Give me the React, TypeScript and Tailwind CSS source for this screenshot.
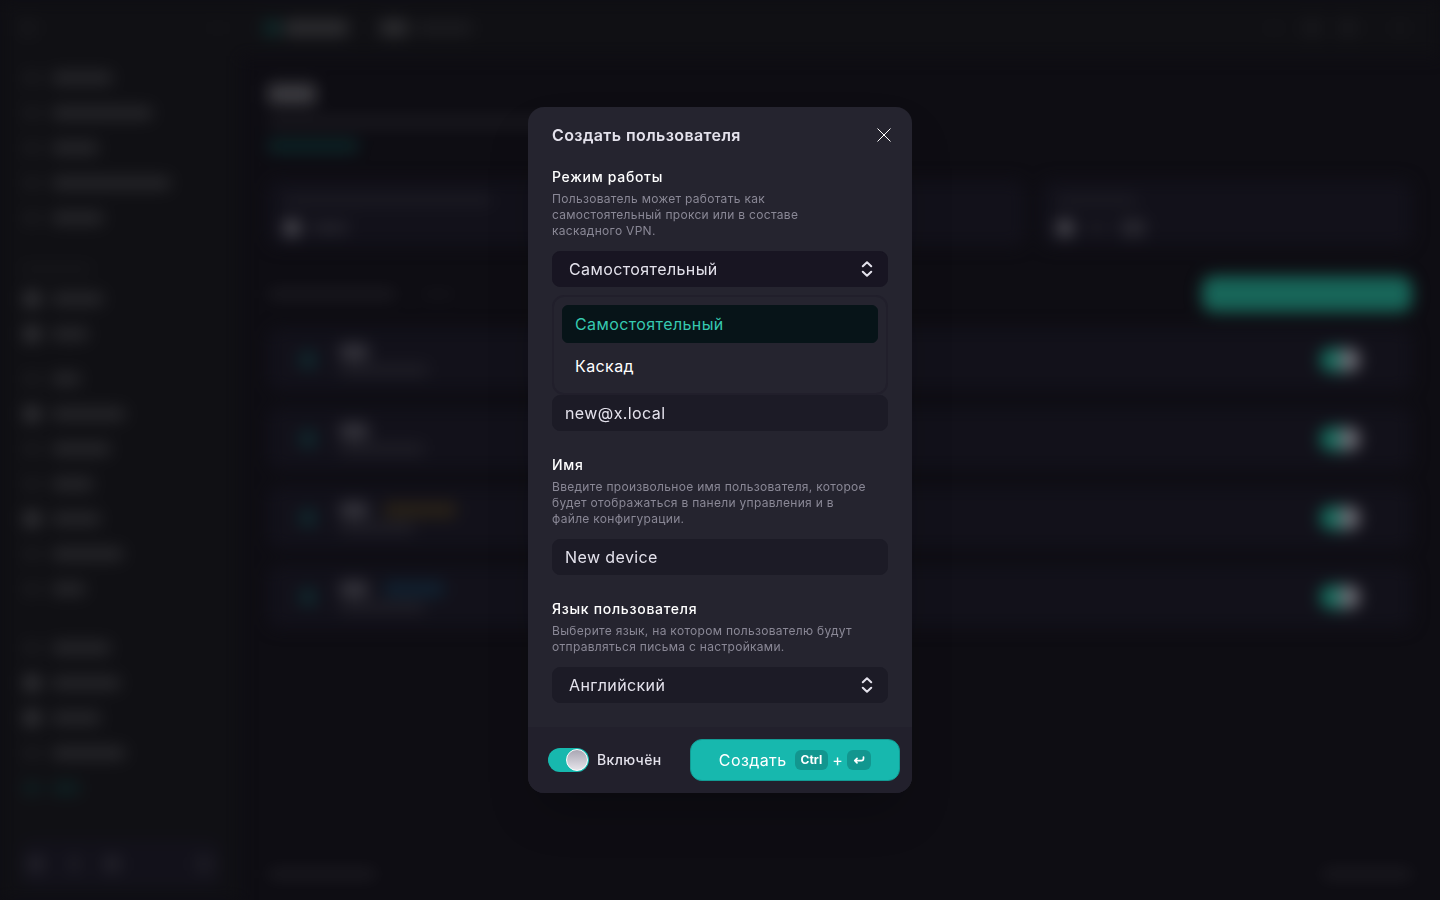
import { useState } from 'react'
import clsx from 'clsx'

const NAV_GROUPS = [
  { heading: 0, gap: 'mt-0', items: [60, 100, 46, 118, 51], bright: [] },
  { heading: 72, gap: 'mt-[22px]', items: [51, 36], bright: [0, 1] },
  { heading: 0, gap: 'mt-[10px]', items: [28, 73, 58, 41, 48, 71, 33], bright: [1, 4] },
  { heading: 0, gap: 'mt-6', items: [58, 68, 48, 73, 28], bright: [1, 2] },
]

const USERS = [
  { id: 1, sub: 88, badge: '' },
  { id: 2, sub: 84, badge: '' },
  { id: 3, sub: 74, badge: 'w-[72px] bg-yellow-500/10' },
  { id: 4, sub: 84, badge: 'w-[60px] bg-sky-500/10' },
]

const MODES = ['Самостоятельный', 'Каскад']

function Bar({ width, className }: { width?: number; className?: string }) {
  return <span className={clsx('block shrink-0 rounded', className)} style={width ? { width } : undefined} />
}

function Sidebar() {
  return (
    <aside className="flex w-60 shrink-0 flex-col bg-[#101014] px-5">
      <div className="flex h-[60px] items-center justify-between pb-1">
        <Bar className="h-4 w-4 bg-white/3" />
        <Bar className="h-4 w-1 bg-white/3" />
      </div>
      <nav>
        {NAV_GROUPS.map((group, i) => (
          <div key={i} className={group.gap}>
            {group.heading > 0 && (
              <div className="flex h-6 items-center">
                <Bar width={group.heading} className="h-2 bg-white/3" />
              </div>
            )}
            {group.items.map((width, j) => {
              const active = i === 3 && j === 4
              const bright = group.bright.includes(j)
              return (
                <a key={j} href="#" className="flex h-[35px] items-center gap-3 pl-1">
                  <Bar className={clsx('w-4', active ? 'h-3 bg-teal-500/10' : bright ? 'h-4 bg-white/15' : 'h-3 bg-white/5')} />
                  <Bar width={width} className={clsx('h-3', active ? 'bg-teal-500/10' : 'bg-white/10')} />
                </a>
              )
            })}
          </div>
        ))}
      </nav>
      <div className="mt-auto mb-3 flex h-12 items-center gap-6 rounded-xl bg-[#12111a] px-2">
        <Bar className="h-4 w-4 bg-white/8" />
        <Bar className="h-4 w-3 bg-white/5" />
        <Bar className="h-4 w-4 bg-white/8" />
        <Bar className="ml-auto h-4 w-4 bg-white/5" />
      </div>
    </aside>
  )
}

function Backdrop() {
  return (
    <div inert className="flex min-h-screen blur-[8px]">
      <Sidebar />
      <div className="flex min-w-0 flex-1 flex-col">
        <header className="flex h-14 items-center bg-[#101014] pr-9 pl-6">
          <Bar className="h-4 w-4 bg-teal-500/15" />
          <Bar className="ml-1 h-4 w-16 bg-white/12" />
          <Bar className="ml-8 h-4 w-7 bg-white/12" />
          <Bar className="ml-2 h-3 w-14 bg-white/5" />
          <div className="ml-auto flex items-center gap-5">
            <Bar className="h-1 w-5 bg-white/3" />
            <Bar className="h-4 w-4 bg-white/4" />
            <Bar className="h-4 w-4 bg-white/4" />
            <Bar className="ml-5 h-4 w-2 bg-white/3" />
          </div>
        </header>
        <main className="flex flex-1 flex-col px-7 pt-7">
          <Bar className="h-5 w-12 bg-white/20" />
          <Bar className="mt-3 h-3 w-[400px] bg-white/5" />
          <Bar className="mt-3 h-3 w-[90px] bg-teal-500/15" />
          <div className="mt-7 grid grid-cols-3 gap-4">
            <div className="col-span-2 h-[66px] rounded-xl bg-[#12111a] p-4">
              <Bar className="h-2 w-52 bg-white/5" />
              <div className="mt-4 flex items-center gap-3">
                <Bar className="h-4 w-4 bg-white/25" />
                <Bar className="h-2 w-9 bg-white/10" />
              </div>
            </div>
            <div className="h-[66px] rounded-xl bg-[#12111a] p-4">
              <Bar className="h-2 w-20 bg-white/5" />
              <div className="mt-4 flex items-center gap-3">
                <Bar className="h-4 w-4 bg-white/25" />
                <Bar className="h-2 w-6 bg-white/5" />
                <Bar className="h-4 w-6 bg-white/10" />
              </div>
            </div>
          </div>
          <div className="mt-[30px] flex h-9 items-center">
            <Bar className="h-3 w-32 bg-white/5" />
            <Bar className="ml-6 h-2 w-9 bg-white/3" />
            <button type="button" className="ml-auto h-9 w-[210px] rounded-xl bg-[#186659]" />
          </div>
          <ul className="mt-4 flex flex-col gap-4">
            {USERS.map((user) => (
              <li key={user.id} className="flex h-[63px] items-center rounded-xl bg-[#12111a] pr-13 pl-8">
                <Bar className="h-4 w-4 bg-teal-500/15" />
                <div className="ml-6">
                  <div className="flex items-center gap-4">
                    <Bar className="h-4 w-7 bg-white/15" />
                    {user.badge && <Bar className={clsx('h-4', user.badge)} />}
                  </div>
                  <Bar width={user.sub} className="mt-1 h-3 bg-white/5" />
                </div>
                <input
                  type="checkbox"
                  defaultChecked
                  className="ml-auto h-6 w-10 appearance-none rounded-full bg-[#15705f] before:ml-[18px] before:block before:h-6 before:w-[22px] before:rounded-full before:bg-[#6a6a72]"
                />
              </li>
            ))}
          </ul>
          <footer className="mt-auto mb-5 flex justify-between">
            <Bar className="h-3 w-[108px] bg-white/5" />
            <Bar className="h-3 w-[90px] bg-white/5" />
          </footer>
        </main>
      </div>
    </div>
  )
}

function Chevrons() {
  return (
    <svg
      className="pointer-events-none absolute top-2.5 right-[15px] h-4 w-3"
      viewBox="0 0 12 16"
      fill="none"
      stroke="#e4e2ec"
      strokeWidth="2"
      strokeLinecap="round"
      strokeLinejoin="round"
    >
      <path d="M1.8 5.2 6 1.2l4.2 4M1.8 10.8l4.2 4 4.2-4" />
    </svg>
  )
}

function FieldText({ id, title, text }: { id: string; title: string; text: string }) {
  return (
    <>
      <label htmlFor={id} className="block text-sm leading-5 font-medium tracking-wider text-white">{title}</label>
      <p className="mt-1 mr-4 mb-3 text-xs leading-4 tracking-wide text-[#8a8896]">{text}</p>
    </>
  )
}

function CreateUserDialog() {
  const [mode, setMode] = useState(MODES[0])

  return (
    <div role="dialog" aria-labelledby="dialog-title" className="w-96 overflow-hidden rounded-2xl bg-[#25242f] shadow-2xl">
      <div className="flex items-center justify-between px-6 pt-4">
        <h2 id="dialog-title" className="text-base leading-6 font-semibold tracking-wide text-[#e4e2ec]">Создать пользователя</h2>
        <button type="button" aria-label="Закрыть" className="-mr-2 flex h-6 w-6 items-center justify-center">
          <svg className="h-3.5 w-3.5" viewBox="0 0 14 14" stroke="#fff" strokeWidth="1">
            <path d="m.5.5 13 13M13.5.5l-13 13" />
          </svg>
        </button>
      </div>

      <form>
        <div className="space-y-6 px-6 pt-5 pb-6">
          <div>
            <FieldText id="mode" title="Режим работы" text="Пользователь может работать как самостоятельный прокси или в составе каскадного VPN." />
            <div className="relative">
              <select
                id="mode"
                value={mode}
                onChange={(e) => setMode(e.target.value)}
                className="h-9 w-full appearance-none rounded-lg border border-[#181522] bg-[#181522] px-4 text-base tracking-wide text-[#e4e2ec]"
              >
                {MODES.map((m) => <option key={m}>{m}</option>)}
              </select>
              <Chevrons />
              <ul role="listbox" className="absolute inset-x-0 top-full z-10 mt-2 flex flex-col gap-1 rounded-xl border-2 border-[#211f2b] bg-[#25242f] p-2">
                {MODES.map((m) => (
                  <li
                    key={m}
                    role="option"
                    aria-selected={m === mode}
                    onClick={() => setMode(m)}
                    className={clsx(
                      'flex h-[38px] items-center rounded-md border px-3 text-base tracking-wide',
                      m === mode ? 'border-[#071418] bg-[#071418] text-[#36c9b0]' : 'border-transparent text-white'
                    )}
                  >
                    {m}
                  </li>
                ))}
              </ul>
            </div>
          </div>

          <div className="pt-21">
            <input aria-label="Email" type="email" defaultValue="new@x.local" className="block h-9 w-full rounded-lg border border-[#1c1b26] bg-[#1c1b26] px-3 text-base tracking-wide text-[#e4e2ec]" />
          </div>

          <div>
            <FieldText id="name" title="Имя" text="Введите произвольное имя пользователя, которое будет отображаться в панели управления и в файле конфигурации." />
            <input id="name" type="text" defaultValue="New device" className="block h-9 w-full rounded-lg border border-[#1c1b26] bg-[#1c1b26] px-3 text-base tracking-wide text-[#e4e2ec]" />
          </div>

          <div>
            <FieldText id="lang" title="Язык пользователя" text="Выберите язык, на котором пользователю будут отправляться письма с настройками." />
            <div className="relative">
              <select id="lang" className="h-9 w-full appearance-none rounded-lg border border-[#1c1b26] bg-[#1c1b26] px-4 text-base tracking-wide text-[#e4e2ec]">
                <option>Английский</option>
              </select>
              <Chevrons />
            </div>
          </div>
        </div>

        <div className="flex items-center justify-between bg-[#22202c] py-3 pr-3 pl-5">
          <label className="flex items-center gap-2 text-sm font-medium tracking-wide text-[#e4e2ec]">
            <input
              type="checkbox"
              defaultChecked
              className="h-6 w-[41px] appearance-none rounded-full bg-[#17b8ae] p-px before:ml-[17px] before:block before:h-[22px] before:w-[22px] before:rounded-full before:border before:border-white before:bg-linear-to-b before:from-[#a9a6b3] before:to-[#e6e4ea]"
            />
            Включён
          </label>
          <button type="submit" className="flex h-[42px] w-[210px] items-center justify-center rounded-xl border border-[#129a93] bg-[#17b8ae] text-base tracking-wide text-white">
            Создать
            <kbd className="ml-2 flex h-5 items-center rounded-md bg-[#12968f] px-1.5 font-[Inter] text-xs font-bold tracking-normal">Ctrl</kbd>
            <span className="mx-1 text-base leading-5">+</span>
            <kbd className="flex h-5 w-6 items-center justify-center rounded-md bg-[#12968f]">
              <svg className="h-2.5 w-3" viewBox="0 0 12 10" fill="none" stroke="#fff" strokeWidth="1.7" strokeLinecap="round" strokeLinejoin="round">
                <path d="M10.5 2v1.4c0 1.4-.8 2.2-2.2 2.2H2M4 3.4 1.8 5.6 4 7.8" />
              </svg>
            </kbd>
          </button>
        </div>
      </form>
    </div>
  )
}

export default function App() {
  return (
    <div className="relative min-h-screen overflow-hidden bg-[#0e0d13] font-[Inter,sans-serif]">
      <Backdrop />
      <div className="fixed inset-0 flex items-center justify-center">
        <CreateUserDialog />
      </div>
    </div>
  )
}
